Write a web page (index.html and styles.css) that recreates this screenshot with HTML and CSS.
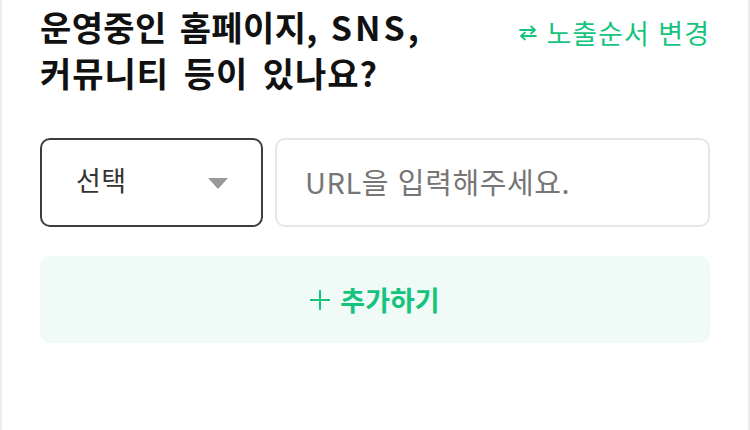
FILE: index.html
```html
<!DOCTYPE html>
<html lang="ko">
<head>
<meta charset="utf-8">
<link rel="stylesheet" href="styles.css">
</head>
<body>
<div class="page">
  <div class="header">
    <h1 class="title"><span class="line1">운영중인 홈페이지, <span class="latin">SNS</span>,</span><br><span class="line2">커뮤니티 등이 있나요?</span></h1>
    <a class="reorder" href="#">
      <svg class="swap" width="20" height="16" viewBox="0 0 20 16" fill="none" stroke="currentColor" stroke-width="1.8" stroke-linecap="round" stroke-linejoin="round">
        <path d="M2 5h15M13 1.5l4 3.5-4 3.5"/>
        <path d="M18 11H3M7 7.5L3 11l4 3.5"/>
      </svg>
      <span>노출순서 변경</span>
    </a>
  </div>
  <div class="fields">
    <div class="select">
      <span class="select-label">선택</span>
      <span class="caret"></span>
    </div>
    <div class="input">
      <span class="placeholder">URL을 입력해주세요.</span>
    </div>
  </div>
  <button class="add" type="button"><span class="plus"></span><span>추가하기</span></button>
</div>
</body>
</html>
```
FILE: styles.css
```css
* { box-sizing: border-box; }
html, body { margin: 0; padding: 0; background: #fff; }
body {
  font-family: "Noto Sans CJK KR", "Noto Sans", sans-serif;
  color: #111;
}
.page {
  width: 750px;
  height: 430px;
  border-left: 2px solid #ececec;
  border-right: 2px solid #ececec;
  padding: 4px 38px 0 38px;
}
.header {
  display: flex;
  justify-content: space-between;
  align-items: flex-start;
}
.title {
  margin: 0;
  font-size: 34px;
  line-height: 46px;
  font-weight: 700;
  letter-spacing: 0.4px;
  color: #111;
}
.line1 { word-spacing: 3px; }
.line2 { word-spacing: 4px; letter-spacing: 1px; }
.latin { letter-spacing: 3px; }
.reorder {
  display: flex;
  align-items: center;
  gap: 8px;
  margin-top: 12px;
  color: #14c47d;
  text-decoration: none;
  font-size: 27px;
  line-height: 34px;
  letter-spacing: 1px;
}
.swap { display: block; }
.fields {
  display: flex;
  gap: 12px;
  margin-top: 42px;
}
.select {
  width: 223px;
  height: 89px;
  border: 2px solid #3d3d3d;
  border-radius: 10px;
  display: flex;
  align-items: center;
  justify-content: space-between;
  padding: 0 33px 0 34px;
}
.select-label {
  font-size: 27px;
  letter-spacing: 0.5px;
  color: #333;
  margin-top: -6px;
}
.caret {
  width: 0;
  height: 0;
  border-left: 10px solid transparent;
  border-right: 10px solid transparent;
  border-top: 11px solid #999;
  margin-top: 2px;
}
.input {
  flex: 1;
  height: 89px;
  border: 2px solid #e6e6e6;
  border-radius: 10px;
  display: flex;
  align-items: center;
  padding-left: 28px;
}
.placeholder {
  font-size: 29px;
  color: #767676;
  letter-spacing: 0.6px;
  margin-top: -4px;
}
.add {
  display: flex;
  align-items: center;
  justify-content: center;
  gap: 10px;
  width: 100%;
  height: 87px;
  margin-top: 29px;
  border: none;
  border-radius: 10px;
  background: #f0faf6;
  color: #14c47d;
  font-family: inherit;
  font-size: 27px;
  font-weight: 700;
  letter-spacing: 0;
  padding: 0;
}
.plus {
  position: relative;
  width: 20px;
  height: 20px;
}
.plus::before, .plus::after {
  content: "";
  position: absolute;
  background: #14c47d;
}
.plus::before { left: 0; right: 0; top: 9px; height: 2px; }
.plus::after { top: 0; bottom: 0; left: 9px; width: 2px; }
```
